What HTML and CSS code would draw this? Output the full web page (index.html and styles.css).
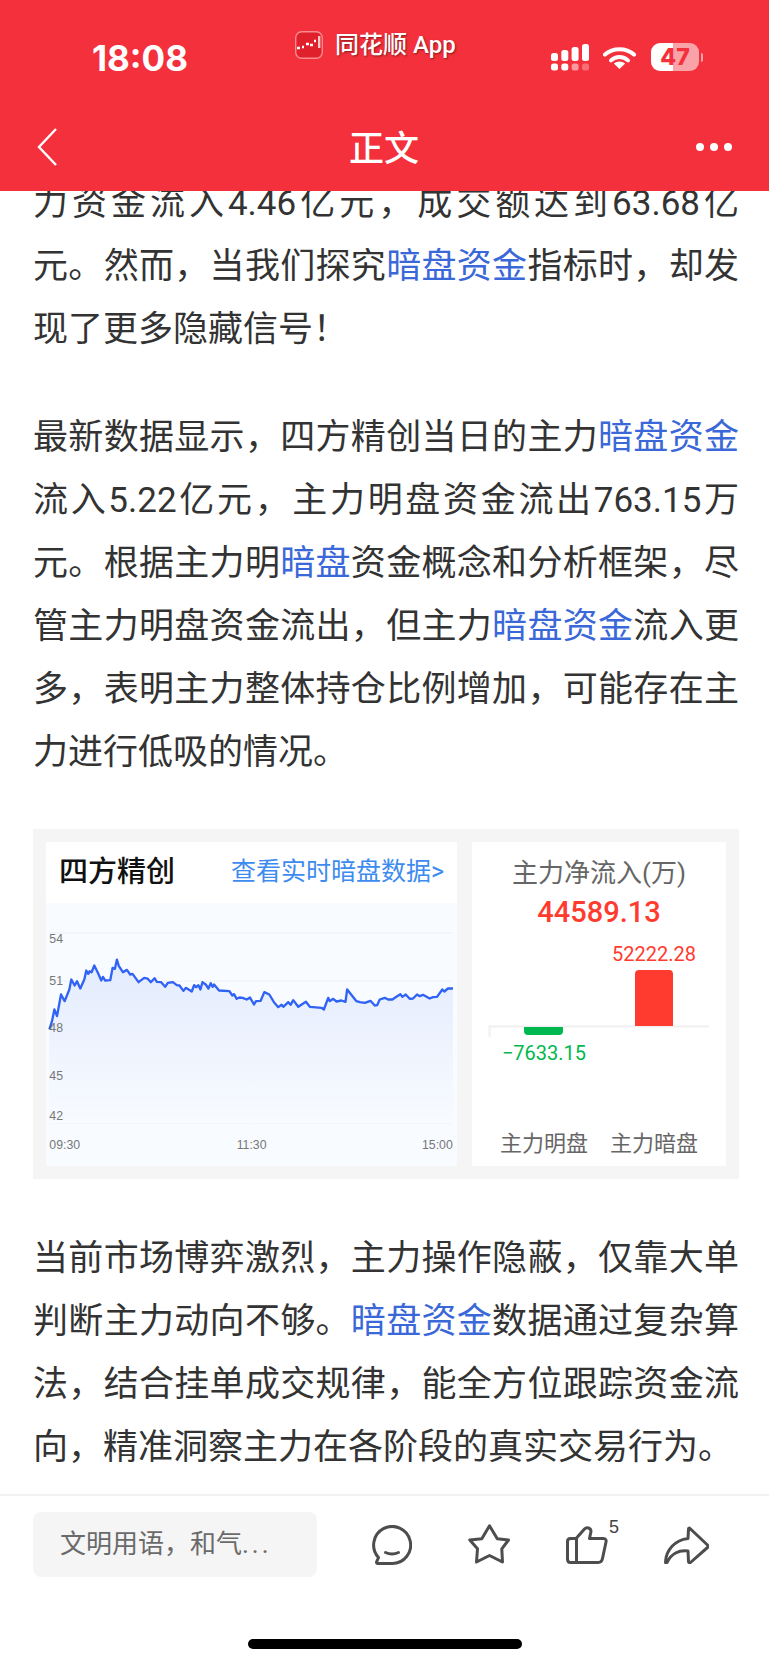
FILE: index.html
```html
<!DOCTYPE html>
<html lang="zh-CN">
<head>
    <meta charset="UTF-8">
    <meta name="viewport" content="width=device-width, initial-scale=1.0">
    <title>正文</title>
    <link rel="stylesheet" href="styles.css">
</head>
<body>
    <div id="phone">
        <header class="top-bar">
            <div class="status-bar">
                <span class="clock">18:08</span>
                <div class="app-tag">
                    <svg class="app-logo" viewBox="0 0 28 28">
                        <rect x="0.7" y="0.7" width="26.6" height="26.6" rx="6" fill="#e0202a" stroke="#f98a8f" stroke-width="1.4"/>
                        <path d="M2 17h3M7 16h2M11 13h3M15 14h3M19 10h2" stroke="#fff" stroke-width="2.4"/>
                        <rect x="23" y="5" width="2.4" height="12" fill="#fff" opacity=".75"/>
                    </svg>
                    <span class="app-name">同花顺 App</span>
                </div>
                <div class="status-icons">
                    <svg class="signal" viewBox="0 0 38 27" fill="#fff">
                        <rect x="0" y="9" width="7" height="8" rx="2.5"/>
                        <rect x="10.3" y="6" width="7" height="11" rx="2.5"/>
                        <rect x="20.6" y="3" width="7" height="14" rx="2.5"/>
                        <rect x="31" y="0" width="7" height="17" rx="2.5"/>
                        <rect x="0" y="19.5" width="7" height="7" rx="2.5"/>
                        <rect x="10.3" y="19.5" width="7" height="7" rx="2.5"/>
                        <rect x="20.6" y="19.5" width="7" height="7" rx="2.5" opacity=".5"/>
                        <rect x="31" y="19.5" width="7" height="7" rx="2.5" opacity=".3"/>
                    </svg>
                    <svg class="wifi" viewBox="0 0 33 23">
                        <path d="M2 8.6C10 1.4 23 1.4 31 8.6" fill="none" stroke="#fff" stroke-width="4" stroke-linecap="round"/>
                        <path d="M8 14.4C12.8 10 20.2 10 25 14.4" fill="none" stroke="#fff" stroke-width="4" stroke-linecap="round"/>
                        <path d="M10.8 17.6C14 14.8 19 14.8 22.2 17.6L16.5 23Z" fill="#fff"/>
                    </svg>
                    <div class="battery">
                        <div class="battery-body"><span class="battery-level">47</span></div>
                        <div class="battery-tip"></div>
                    </div>
                </div>
            </div>
            <nav class="nav-bar">
                <svg class="back" viewBox="0 0 20 38"><path d="M19 1 2 19l17 18" fill="none" stroke="#fff" stroke-width="2.4"/></svg>
                <h1 class="nav-title">正文</h1>
                <div class="more"><i></i><i></i><i></i></div>
            </nav>
        </header>

        <main class="article-view">
            <article class="article">
                <p>力资金流入4.46亿元，成交额达到63.68亿元。然而，当我们探究<a>暗盘资金</a>指标时，却发现了更多隐藏信号！</p>
                <p>最新数据显示，四方精创当日的主力<a>暗盘资金</a>流入5.22亿元，主力明盘资金流出763.15万元。根据主力明<a>暗盘</a>资金概念和分析框架，尽管主力明盘资金流出，但主力<a>暗盘资金</a>流入更多，表明主力整体持仓比例增加，可能存在主力进行低吸的情况。</p>

                <div class="chart-card">
                    <div class="panel price-panel">
                        <div class="panel-head">
                            <span class="stock-name">四方精创</span>
                            <span class="live-link">查看实时暗盘数据&gt;</span>
                        </div>
                        <svg class="price-chart" viewBox="78 250 1233 791">
                            <defs>
                                <linearGradient id="areaFill" x1="0" y1="0" x2="0" y2="1">
                                    <stop offset="0" stop-color="#e3ebfd"/>
                                    <stop offset="1" stop-color="#f8fbff"/>
                                </linearGradient>
                            </defs>
                            <g class="grid-lines">
                                <line x1="87" y1="340" x2="1300" y2="340"/>
                                <line x1="87" y1="485" x2="1300" y2="485"/>
                                <line x1="87" y1="625" x2="1300" y2="625"/>
                                <line x1="87" y1="772" x2="1300" y2="772"/>
                                <line x1="87" y1="913" x2="1300" y2="913"/>
                            </g>
                            <polygon class="price-area" fill="url(#areaFill)" points="87,630 95,605 102,570 110,590 122,525 133,545 147,510 153,480 163,498 170,485 180,507 192,480 198,453 204,463 208,455 214,458 222,438 232,458 243,483 248,472 255,483 270,482 277,445 284,448 290,420 296,440 308,458 320,451 330,465 337,463 355,488 372,475 382,477 392,488 403,476 410,487 423,488 435,502 443,490 458,488 470,497 478,498 490,514 497,505 515,516 522,497 528,503 535,497 541,510 547,488 557,495 565,507 572,491 578,502 582,495 597,513 628,515 637,528 642,524 650,538 658,534 668,535 680,540 690,534 702,555 708,545 722,544 733,518 748,525 762,548 775,563 785,556 790,562 805,548 812,556 820,542 835,562 858,547 870,562 905,565 912,570 925,535 930,545 940,538 950,546 965,543 977,547 982,510 1010,545 1020,548 1035,550 1052,544 1065,558 1072,557 1080,540 1095,535 1105,540 1118,540 1130,532 1142,524 1148,532 1158,525 1170,538 1180,537 1192,525 1200,530 1210,526 1230,537 1240,533 1252,532 1268,510 1274,516 1285,507 1300,507 1300,913 87,913"/>
                            <polyline class="price-line" points="87,630 95,605 102,570 110,590 122,525 133,545 147,510 153,480 163,498 170,485 180,507 192,480 198,453 204,463 208,455 214,458 222,438 232,458 243,483 248,472 255,483 270,482 277,445 284,448 290,420 296,440 308,458 320,451 330,465 337,463 355,488 372,475 382,477 392,488 403,476 410,487 423,488 435,502 443,490 458,488 470,497 478,498 490,514 497,505 515,516 522,497 528,503 535,497 541,510 547,488 557,495 565,507 572,491 578,502 582,495 597,513 628,515 637,528 642,524 650,538 658,534 668,535 680,540 690,534 702,555 708,545 722,544 733,518 748,525 762,548 775,563 785,556 790,562 805,548 812,556 820,542 835,562 858,547 870,562 905,565 912,570 925,535 930,545 940,538 950,546 965,543 977,547 982,510 1010,545 1020,548 1035,550 1052,544 1065,558 1072,557 1080,540 1095,535 1105,540 1118,540 1130,532 1142,524 1148,532 1158,525 1170,538 1180,537 1192,525 1200,530 1210,526 1230,537 1240,533 1252,532 1268,510 1274,516 1285,507 1300,507"/>
                            <g class="axis-text">
                                <text x="87" y="371">54</text>
                                <text x="87" y="496">51</text>
                                <text x="87" y="639">48</text>
                                <text x="87" y="783">45</text>
                                <text x="87" y="901">42</text>
                                <text x="87" y="990">09:30</text>
                                <text x="650" y="990">11:30</text>
                                <text x="1207" y="990">15:00</text>
                            </g>
                        </svg>
                    </div>
                    <div class="panel flow-panel">
                        <div class="flow-title">主力净流入(万)</div>
                        <div class="flow-total">44589.13</div>
                        <svg class="flow-chart" viewBox="0 0 254 165">
                            <path class="flow-axis" d="M17.5 108V97.5H237"/>
                            <path class="bar-up" d="M163 97V45a4 4 0 0 1 4-4h30a4 4 0 0 1 4 4v52z"/>
                            <path class="bar-down" d="M52 98h39v4a4 4 0 0 1-4 4H56a4 4 0 0 1-4-4z"/>
                            <text class="flow-value up" x="182" y="32">52222.28</text>
                            <text class="flow-value down" x="72" y="131">−7633.15</text>
                        </svg>
                        <div class="flow-labels">
                            <span>主力明盘</span>
                            <span>主力暗盘</span>
                        </div>
                    </div>
                </div>

                <p>当前市场博弈激烈，主力操作隐蔽，仅靠大单判断主力动向不够。<a>暗盘资金</a>数据通过复杂算法，结合挂单成交规律，能全方位跟踪资金流向，精准洞察主力在各阶段的真实交易行为。</p>
            </article>
        </main>

        <footer class="action-bar">
            <div class="comment-box">文明用语，和气<span class="dots">...</span></div>
            <div class="actions">
                <svg class="icon icon-comment" viewBox="0 0 40 40"><path d="M6.500 32.500A18.500 18.500 0 1 1 20 38.500H5.500C4.500 38.500 4.300 37.500 4.800 36.500Z"/><path d="M13.500 27.500c4 1.800 9 1.800 13 0"/></svg>
                <svg class="icon icon-star" viewBox="0 0 42 41"><path d="M21.500 1.800 29.300 14.800 40.500 16 33.800 24.800 34.500 38 21.500 31.500 8.500 38 9.500 24.800 1.800 16 13.800 14.800Z"/></svg>
                <div class="like">
                    <svg class="icon icon-thumb" viewBox="0 0 42 38"><path d="M10.500 12 18.500 3C20.500 .8 25 1.800 25 5.500L23.500 12.500H37.500C39.500 12.500 40.500 14 40 16L36.500 32.500C36 35 34 36.500 32 36.500H4.500C2.500 36.500 1.500 35 1.500 33V15.500C1.500 13.500 2.500 12.500 4.500 12.500H10.500V36.500"/></svg>
                    <span class="like-count">5</span>
                </div>
                <svg class="icon icon-share" viewBox="0 0 45 38"><path d="M26 2.500 43.500 19C44.300 19.800 44.300 20.800 43.500 21.500L26.500 36.500C25.500 37 24.500 36.500 24.500 35.500L24 25C15 23.500 7 28 3 36.500C2 37.500 1.500 37 1.500 36C2 24 11 14 24 12.500L24.500 3C24.500 2 25.300 1.800 26 2.500Z"/></svg>
            </div>
        </footer>
        <div class="home-row"><div class="home-bar"></div></div>
    </div>
</body>
</html>
```

FILE: styles.css
```css
* {
    box-sizing: border-box;
}
html, body {
    margin: 0;
    padding: 0;
}
body {
    font-family: Roboto, "Noto Sans CJK SC", sans-serif;
    background-color: #fff;
}
#phone {
    width: 769px;
    height: 1665px;
    display: flex;
    flex-direction: column;
    overflow: hidden;
}

/* red header */
.top-bar {
    height: 191px;
    flex: none;
    background-color: #f3303b;
    color: #fff;
}
.status-bar {
    height: 112px;
    display: flex;
    align-items: flex-start;
    padding: 30px 66px 0 92px;
}
.clock {
    font-family: Inter, Roboto, sans-serif;
    font-size: 35px;
    font-weight: 700;
    line-height: 57px;
    width: 203px;
}
.app-tag {
    display: flex;
    align-items: center;
    gap: 12px;
    width: 256px;
}
.app-logo {
    width: 28px;
    height: 28px;
}
.app-name {
    font-size: 24px;
    font-weight: 500;
    line-height: 30px;
    text-shadow: 1px 1px 2px rgba(0, 0, 0, 0.45);
    white-space: nowrap;
}
.status-icons {
    display: flex;
    align-items: flex-start;
    padding-top: 13px;
}
.signal {
    width: 38px;
    height: 27px;
    margin-top: 1px;
}
.wifi {
    width: 33px;
    height: 23px;
    margin: 3px 15px 0 14px;
}
.battery {
    display: flex;
    align-items: center;
    gap: 2px;
}
.battery-body {
    width: 48px;
    height: 28px;
    border-radius: 9px;
    background: linear-gradient(to right, #fff 46%, #f9a3a8 46%);
    color: #f3303b;
    font-family: Inter, Roboto, sans-serif;
    font-size: 23px;
    font-weight: 800;
    line-height: 28px;
    text-align: center;
}
.battery-tip {
    width: 2px;
    height: 9px;
    border-radius: 0 2px 2px 0;
    background-color: #f9a3a8;
}
.nav-bar {
    height: 79px;
    display: flex;
    align-items: center;
    justify-content: space-between;
    padding: 0 37px;
}
.back {
    width: 20px;
    height: 38px;
    margin-top: -10px;
}
.nav-title {
    margin: -3px 0 0 15px;
    font-size: 35px;
    font-weight: 500;
    line-height: 50px;
}
.more {
    display: flex;
    gap: 6px;
    margin-top: -10px;
}
.more i {
    width: 8px;
    height: 8px;
    border-radius: 50%;
    background-color: #fff;
}

/* article */
.article-view {
    height: 1303px;
    flex: none;
    overflow: hidden;
}
.article {
    margin-top: -19px;
    padding: 0 30px 0 33px;
    font-size: 35px;
    line-height: 63px;
    color: #333;
}
.article p {
    margin: 0 0 45px;
    text-align: justify;
}
.article a {
    color: #3a68d8;
}

/* stock chart block */
.chart-card {
    display: flex;
    justify-content: space-between;
    width: 706px;
    height: 350px;
    padding: 13px;
    margin-bottom: 48px;
    background-color: #f5f5f5;
}
.panel {
    background-color: #fff;
}
.price-panel {
    width: 411px;
    display: flex;
    flex-direction: column;
}
.panel-head {
    height: 61px;
    display: flex;
    justify-content: space-between;
    align-items: center;
    padding: 0 13px;
}
.stock-name {
    font-size: 29px;
    font-weight: 500;
    line-height: 40px;
    color: #111;
}
.live-link {
    font-size: 25px;
    line-height: 40px;
    color: #3d8bef;
}
.price-chart {
    display: block;
    width: 411px;
    height: 264px;
    background-color: #f8fbff;
}
.grid-lines line {
    stroke: #eef0f6;
    stroke-width: 3;
}
.price-line {
    fill: none;
    stroke: #2f62f5;
    stroke-width: 7;
    stroke-linejoin: round;
}
.axis-text text {
    font-family: "Liberation Sans", sans-serif;
    font-size: 37px;
    fill: #777;
}
.flow-panel {
    width: 254px;
    display: flex;
    flex-direction: column;
    align-items: center;
    padding: 13px 0 6px;
}
.flow-title {
    font-size: 26px;
    line-height: 36px;
    color: #666;
}
.flow-total {
    font-size: 29px;
    font-weight: 500;
    line-height: 42px;
    color: #ff3b30;
}
.flow-chart {
    display: block;
    width: 254px;
    height: 165px;
    margin-top: -4px;
}
.flow-axis {
    fill: none;
    stroke: #f0f0f0;
    stroke-width: 2;
}
.bar-up {
    fill: #ff3b30;
}
.bar-down {
    fill: #00b84f;
}
.flow-value {
    font-size: 20px;
    text-anchor: middle;
}
.flow-value.up {
    fill: #ff3b30;
}
.flow-value.down {
    fill: #00b84f;
}
.flow-labels {
    width: 100%;
    display: flex;
    justify-content: space-between;
    margin-top: auto;
    padding: 0 28px;
    font-size: 22px;
    line-height: 32px;
    color: #666;
}

/* bottom action bar */
.action-bar {
    height: 112px;
    flex: none;
    display: flex;
    align-items: flex-start;
    padding: 16px 0 0 33px;
    border-top: 2px solid #f2f2f2;
    background-color: #fff;
}
.comment-box {
    width: 284px;
    height: 65px;
    padding-left: 27px;
    border-radius: 8px;
    background-color: #f5f5f5;
    font-size: 26px;
    line-height: 65px;
    color: #6a6a6a;
}
.dots {
    letter-spacing: 3px;
}
.actions {
    height: 65px;
    display: flex;
    align-items: center;
    margin-left: 55px;
    gap: 56px;
}
.icon {
    display: block;
    fill: none;
    stroke: #4d4d4d;
    stroke-width: 3;
    stroke-linejoin: round;
    stroke-linecap: round;
}
.icon-comment {
    width: 40px;
    height: 40px;
}
.icon-star {
    width: 42px;
    height: 41px;
}
.icon-thumb {
    width: 42px;
    height: 38px;
}
.icon-share {
    width: 45px;
    height: 38px;
}
.like {
    position: relative;
}
.like-count {
    position: absolute;
    top: -9px;
    left: 43px;
    font-family: "Liberation Sans", sans-serif;
    font-size: 18px;
    line-height: 20px;
    color: #444;
}
.home-row {
    flex: 1;
    display: flex;
    justify-content: center;
    padding-top: 33px;
}
.home-bar {
    width: 274px;
    height: 10px;
    border-radius: 5px;
    background-color: #000;
}
```
